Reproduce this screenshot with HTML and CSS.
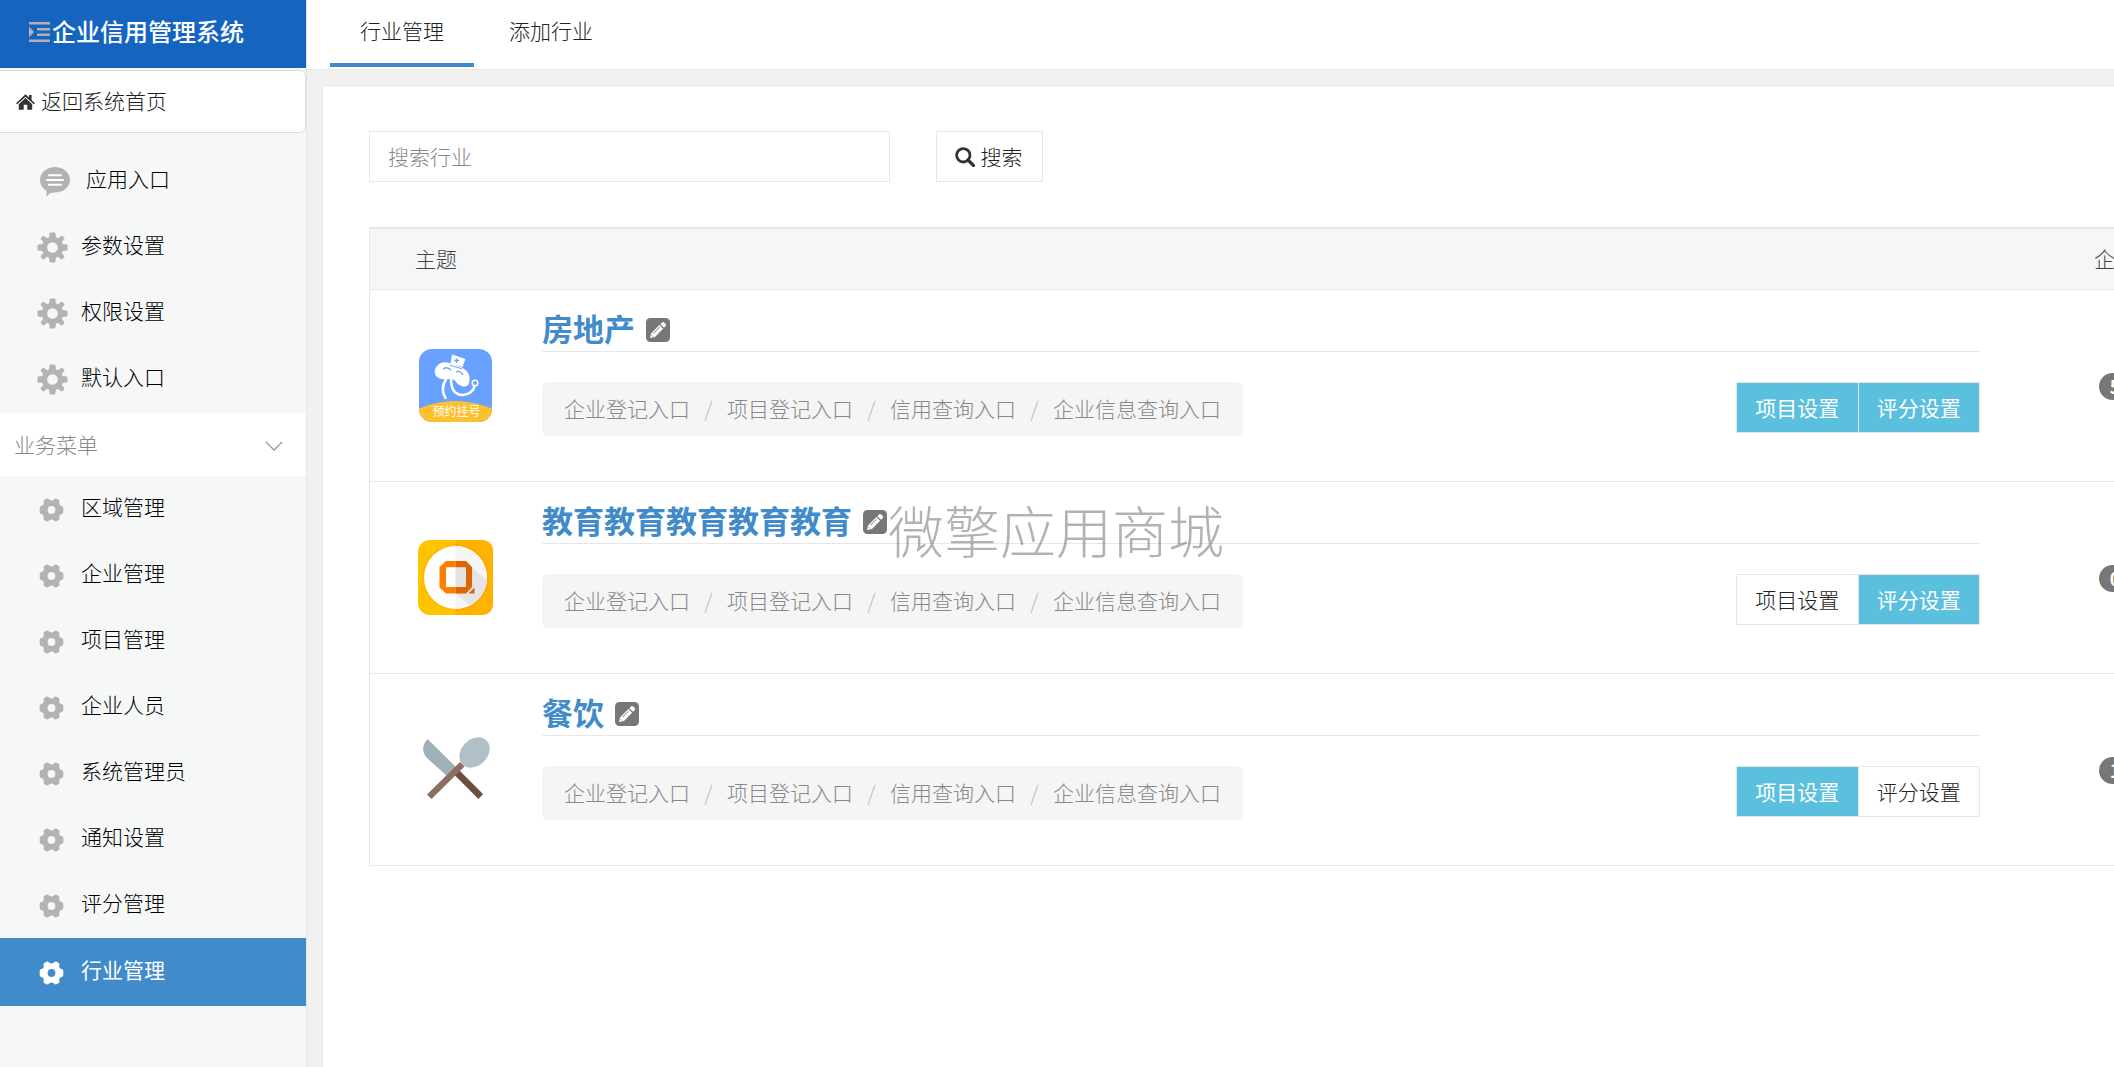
FILE: index.html
```html
<!DOCTYPE html>
<html lang="zh-CN">
<head>
<meta charset="utf-8">
<title>企业信用管理系统</title>
<link rel="stylesheet" href="styles.css">
</head>
<body>
<svg class="sprite" aria-hidden="true">
  <symbol id="cog8" viewBox="0 0 32 32">
    <path fill-rule="evenodd" d="M13 1.500 Q13 .5 14 .5H18Q19 .5 19 1.500L19.500 5.500L21.700 6.400L24.900 4Q25.600 3.500 26.300 4.100L28.200 6Q28.600 6.700 28.100 7.300L25.600 10.400L26.500 12.500L30.500 13Q31.500 13 31.500 14V18Q31.500 19 30.500 19L26.500 19.500L25.600 21.700L28.100 24.800Q28.600 25.500 28 26.200L26.100 28.100Q25.400 28.600 24.800 28.100L21.700 25.600L19.500 26.500L19 30.500Q19 31.500 18 31.500H14Q13 31.500 13 30.500L12.500 26.500L10.400 25.600L7.300 28.100Q6.600 28.600 6 28.100L4 26.100Q3.500 25.400 4 24.800L6.400 21.700L5.500 19.500L1.500 19Q.5 19 .5 18V14Q.5 13 1.500 13L5.500 12.500L6.400 10.400L4 7.300Q3.500 6.600 4 6L6 4Q6.700 3.500 7.300 4L10.400 6.400L12.500 5.500ZM16 10.500a5.500 5.500 0 1 0 0 11a5.500 5.500 0 0 0 0-11Z"/>
  </symbol>
  <symbol id="cog6" viewBox="0 0 26 26">
    <path fill-rule="evenodd" d="M7.500 .8Q9 .3 10 1.300Q13 4.200 16 1.300Q17 .3 18.500 .8L21 2.200Q22 3.100 21.500 4.500Q20.600 8 24.300 8.700Q25.600 9.200 25.800 10.500V15.500Q25.600 16.800 24.300 17.300Q20.600 18 21.500 21.500Q22 22.900 21 23.800L18.500 25.200Q17 25.700 16 24.700Q13 21.800 10 24.700Q9 25.700 7.500 25.200L5 23.800Q4 22.900 4.500 21.500Q5.400 18 1.700 17.300Q.4 16.800 .2 15.500V10.500Q.4 9.200 1.700 8.700Q5.400 8 4.500 4.500Q4 3.100 5 2.200ZM13 8.800a4.200 4.200 0 1 0 0 8.400a4.200 4.200 0 0 0 0-8.400Z"/>
  </symbol>
  <symbol id="edit" viewBox="0 0 24 24">
    <rect width="24" height="24" rx="4.500" fill="#777"/>
    <path fill="#fff" d="M14.300 6.200L16.300 4.300Q17.200 3.600 18.100 4.400L19.800 6.100Q20.500 7 19.800 7.900L18 9.700ZM13.400 7.100L17.100 10.800L9 18.900L4 20L5.200 15.200Z"/>
    <path d="M13.500 9.200L7.400 15.300M5.900 17.400l1 1" stroke="#777" stroke-width="1" fill="none"/>
  </symbol>
</svg>

<div class="app">
  <aside class="sidebar">
    <div class="brand">
      <svg class="brand-icon" viewBox="0 0 21 20"><path fill="#b0b0b0" d="M0 0H21V2.500H0ZM8 6H21V8.500H8ZM8 11.500H21V14H8ZM0 17.500H21V20H0ZM0 4.500L5 10L0 15.500Z"/></svg>
      <span>企业信用管理系统</span>
    </div>
    <a class="home" href="#">
      <svg class="home-icon" viewBox="0 0 19 16"><path fill="#333" d="M9.500 .3L13 3.600V1H15.600V6L19 9.200L17.800 10.300L9.500 2.800L1.200 10.300L0 9.200ZM9.500 4.100L16.200 10.200V15.800H11.300V10.800H7.700V15.800H2.800V10.200Z"/></svg>
      <span>返回系统首页</span>
    </a>
    <ul class="menu menu-main">
      <li><a href="#" class="wide"><svg class="icon-chat" viewBox="0 0 30 30"><path fill="#b3b3b3" d="M15 0A15 12.800 0 0 1 15 25.600Q11.500 25.600 9.500 26.500L6.500 29.800V23.800Q0 20 0 13A15 13 0 0 1 15 0Z"/><path d="M9 8.300H21M7 13H23M9 17.700H21" stroke="#fff" stroke-width="2" stroke-linecap="round"/></svg>应用入口</a></li>
      <li><a href="#"><svg class="icon-lg"><use href="#cog8"/></svg>参数设置</a></li>
      <li><a href="#"><svg class="icon-lg"><use href="#cog8"/></svg>权限设置</a></li>
      <li><a href="#"><svg class="icon-lg"><use href="#cog8"/></svg>默认入口</a></li>
    </ul>
    <button class="section" type="button">
      <span>业务菜单</span>
      <svg class="chevron" viewBox="0 0 18 10"><path d="M1 1L9 9L17 1" fill="none" stroke="#999" stroke-width="1.300"/></svg>
    </button>
    <ul class="menu">
      <li><a href="#"><svg class="icon-sm"><use href="#cog6"/></svg>区域管理</a></li>
      <li><a href="#"><svg class="icon-sm"><use href="#cog6"/></svg>企业管理</a></li>
      <li><a href="#"><svg class="icon-sm"><use href="#cog6"/></svg>项目管理</a></li>
      <li><a href="#"><svg class="icon-sm"><use href="#cog6"/></svg>企业人员</a></li>
      <li><a href="#"><svg class="icon-sm"><use href="#cog6"/></svg>系统管理员</a></li>
      <li><a href="#"><svg class="icon-sm"><use href="#cog6"/></svg>通知设置</a></li>
      <li><a href="#"><svg class="icon-sm"><use href="#cog6"/></svg>评分管理</a></li>
      <li class="active"><a href="#" aria-current="page"><svg class="icon-sm"><use href="#cog6"/></svg>行业管理</a></li>
    </ul>
  </aside>

  <div class="main">
    <nav class="tabs">
      <a class="tab active" href="#">行业管理</a>
      <a class="tab" href="#">添加行业</a>
    </nav>
    <main class="panel">
      <form class="search">
        <input type="text" placeholder="搜索行业" aria-label="搜索行业">
        <button type="button"><svg class="search-icon" viewBox="0 0 20 20"><circle cx="8.300" cy="8.300" r="6.700" fill="none" stroke="#333" stroke-width="2.800"/><path d="M13 13L18.500 18.500" stroke="#333" stroke-width="3.200" stroke-linecap="round"/></svg>搜索</button>
      </form>

      <table class="list">
        <colgroup><col class="col-logo"><col><col class="col-count"></colgroup>
        <thead>
          <tr><th colspan="2">主题</th><th class="count">企业</th></tr>
        </thead>
        <tbody>
          <tr>
            <td class="logo">
              <svg viewBox="0 0 75 75">
                <defs><clipPath id="tile"><rect x="1" y="1" width="73" height="73" rx="13"/></clipPath></defs>
                <g clip-path="url(#tile)">
                  <rect width="75" height="75" fill="#68a1ff"/>
                  <path d="M0 61Q37 45 75 61V75H0Z" fill="#fdc02f"/>
                </g>
                <path fill="#fff" d="M34 6.500L47.500 11L44.500 19L32.500 15.500ZM31 15C22 12 15 20 17 26C19 31 26 32 31 31C34 31 36 31 38 34C42 39 49 41 51 35C53 28 50 23 44 19.500Z"/>
                <path d="M38.500 10.500V15M36.300 12.500H41" stroke="#68a1ff" stroke-width="1.500"/>
                <path d="M32 17.300L44 20.800" stroke="#68a1ff" stroke-width="1"/>
                <path d="M25 21Q29 18 33 22M38 24Q42 22 45 27" fill="none" stroke="#68a1ff" stroke-width="1.300"/>
                <path d="M28 31Q22 41 27.500 50M33 31Q33 47 45 47Q55 46 57 37" fill="none" stroke="#fff" stroke-width="2.500" stroke-linecap="round"/>
                <circle cx="57" cy="35" r="2.800" fill="#68a1ff" stroke="#fff" stroke-width="1.500"/>
                <text x="38.500" y="68" class="logo-text">预约挂号</text>
              </svg>
            </td>
            <td class="info">
              <h3><span>房地产</span><a href="#" aria-label="编辑"><svg class="edit"><use href="#edit"/></svg></a></h3>
              <div class="line">
                <ol class="crumbs"><li><a href="#">企业登记入口</a></li><li><a href="#">项目登记入口</a></li><li><a href="#">信用查询入口</a></li><li><a href="#">企业信息查询入口</a></li></ol>
                <div class="group"><button class="on" type="button">项目设置</button><button class="on" type="button">评分设置</button></div>
              </div>
            </td>
            <td class="count"><span class="badge">5</span></td>
          </tr>
          <tr>
            <td class="logo">
              <svg viewBox="0 0 75 75">
                <rect width="75" height="75" rx="12" fill="#ffc400"/>
                <path d="M37.500 0H63Q75 0 75 12V63Q75 75 63 75H37.500Z" fill="#ffb300"/>
                <path d="M37.500 4A33.500 33.500 0 0 0 37.500 71Z" fill="#ffb900"/>
                <path d="M37.500 4A33.500 33.500 0 0 1 37.500 71Z" fill="#ffa800"/>
                <circle cx="37.500" cy="37.500" r="31.500" fill="#fff"/>
                <path d="M37.500 6A31.500 31.500 0 0 1 37.500 69Z" fill="#f5f5f5"/>
                <path d="M54 27L69 40Q67 57 52 65.500L38 54V53Z" fill="#e5e5e5"/>
                <path d="M37.500 21H28L21.500 27V47.500L28 53.500H37.500V47H28V27.500H37.500Z" fill="#ff7d00"/>
                <path d="M37.500 21H48L54 27V47L48 53.500H37.500V47H48V27.500H37.500ZM56.500 47.500V53.500H50.500Z" fill="#dc6500"/>
                <path d="M28 27.500H37.500V47H28Z" fill="#fff"/><path d="M37.500 27.500H47.500V47H37.500Z" fill="#e2e2e2"/>
              </svg>
            </td>
            <td class="info">
              <h3><span>教育教育教育教育教育</span><a href="#" aria-label="编辑"><svg class="edit"><use href="#edit"/></svg></a><em class="watermark">微擎应用商城</em></h3>
              <div class="line">
                <ol class="crumbs"><li><a href="#">企业登记入口</a></li><li><a href="#">项目登记入口</a></li><li><a href="#">信用查询入口</a></li><li><a href="#">企业信息查询入口</a></li></ol>
                <div class="group"><button type="button">项目设置</button><button class="on" type="button">评分设置</button></div>
              </div>
            </td>
            <td class="count"><span class="badge">0</span></td>
          </tr>
          <tr>
            <td class="logo">
              <svg viewBox="0 0 75 75">
                <path d="M9.500 7L39 36L29 44L9 26Q1 17 9.500 7Z" fill="#9fb0b9"/>
                <path d="M41 38L65 62L60.500 67L36.500 43Z" fill="#6d4c41"/>
                <ellipse cx="56.500" cy="20.500" rx="17" ry="13" transform="rotate(-45 56.500 20.500)" fill="#b1bfc6"/>
                <path d="M42 30L46.500 34.500L13.500 67L9 62.500Z" fill="#8d6e63"/>
              </svg>
            </td>
            <td class="info">
              <h3><span>餐饮</span><a href="#" aria-label="编辑"><svg class="edit"><use href="#edit"/></svg></a></h3>
              <div class="line">
                <ol class="crumbs"><li><a href="#">企业登记入口</a></li><li><a href="#">项目登记入口</a></li><li><a href="#">信用查询入口</a></li><li><a href="#">企业信息查询入口</a></li></ol>
                <div class="group"><button class="on" type="button">项目设置</button><button type="button">评分设置</button></div>
              </div>
            </td>
            <td class="count"><span class="badge">1</span></td>
          </tr>
        </tbody>
      </table>
    </main>
  </div>
</div>
</body>
</html>
```
FILE: styles.css
```css
* { box-sizing: border-box; }

body {
  margin: 0;
  background: #f1f1f1;
  color: #222;
  font-family: "Noto Sans CJK SC", sans-serif;
  font-size: 21px;
  font-weight: 300;
  line-height: 30px;
}

a { color: inherit; text-decoration: none; }
ul, ol { margin: 0; padding: 0; list-style: none; }
button, input { font: inherit; color: inherit; border-radius: 0; }
svg { flex: none; display: block; }
.sprite { position: absolute; width: 0; height: 0; }

.app {
  display: grid;
  grid-template-columns: 307px minmax(0, 1fr);
  min-height: 100vh;
}

/* Sidebar */
.sidebar {
  background: #f6f8f7;
  border-right: 1px solid #e5e5e5;
}
.brand {
  display: flex;
  align-items: center;
  gap: 2px;
  height: 68px;
  padding: 0 0 6px 29px;
  background: #1565c0;
  color: #fff;
  font-size: 24px;
  font-weight: 500;
}
.brand-icon { width: 21px; height: 20px; margin-top: 2px; }
.home {
  display: flex;
  align-items: center;
  gap: 6px;
  height: 63px;
  margin-top: 2px;
  padding: 0 0 4px 16px;
  background: #fff;
  border: 1px solid #ddd;
  border-left: 0;
  border-radius: 0 6px 6px 0;
}
.home-icon { width: 19px; height: 16px; margin-top: 4px; }
.menu a {
  display: flex;
  align-items: center;
  height: 66px;
  padding: 0 0 6px 37px;
  color: #000;
  fill: #b3b3b3;
}
.menu-main { padding: 14px 0 3px; }
.menu-main a { padding-bottom: 4px; }
.menu .wide { padding-left: 40px; }
.icon-chat { width: 30px; height: 30px; margin: 7px 16px 0 0; }
.icon-lg { width: 31px; height: 31px; margin: 6px 13px 0 0; }
.icon-sm { width: 25px; height: 24px; margin: 8px 17px 0 2px; }
.menu .active a {
  height: 68px;
  background: #428bca;
  color: #fff;
  fill: #fff;
  font-weight: 400;
}
.section {
  display: flex;
  align-items: center;
  justify-content: space-between;
  width: 100%;
  height: 62px;
  padding: 0 23px 2px 14px;
  border: 0;
  background: #fff;
  color: #888;
}
.chevron { width: 18px; height: 10px; margin-top: 4px; }

/* Tabs */
.tabs {
  display: flex;
  gap: 5px;
  height: 70px;
  padding: 0 23px;
  background: #fff;
  border-bottom: 1px solid #e7e7e7;
}
.tab {
  height: 67px;
  padding: 15px 30px 0;
  border-bottom: 4px solid transparent;
}
.tab.active { border-color: #428bca; }

/* Content panel */
.main {
  display: flex;
  flex-direction: column;
  min-width: 0;
}
.panel {
  flex: 1;
  margin: 15px 0 0 15px;
  padding: 45px 0 0 46px;
  background: #fff;
  border: solid #e7e7e7;
  border-width: 1px 0 0 1px;
  overflow: hidden;
}
.search {
  display: flex;
  gap: 46px;
  margin-bottom: 45px;
}
.search input {
  width: calc(30% - 3px);
  height: 51px;
  padding: 0 18px 2px;
  border: 1px solid #e7e7eb;
  outline: 0;
}
.search input::placeholder { color: #888; opacity: 1; }
.search button {
  display: flex;
  align-items: center;
  gap: 6px;
  height: 51px;
  padding: 0 19px 2px 18px;
  border: 1px solid #e7e7eb;
  background: #fff;
}
.search-icon { width: 20px; height: 20px; margin-top: 3px; }

/* Industry list: wider than the panel, so the count column runs off its edge */
.list {
  width: calc(100% + 121px);
  table-layout: fixed;
  border-collapse: separate;
  border-spacing: 0;
  border-left: 1px solid #e7e7eb;
}
.col-logo { width: 172px; }
.col-count { width: 240px; }
.list th {
  height: 63px;
  padding: 0 45px 3px;
  border: solid #e7e7eb;
  border-width: 2px 0 1px;
  background: #f6f6f6;
  color: #444;
  font-weight: 300;
  text-align: left;
}
.list td {
  height: 192px;
  padding: 0 0 1px;
  border-bottom: 1px solid #e7e7eb;
}
.list .count { padding-left: 0; padding-right: 0; text-align: center; }
.logo svg { width: 75px; height: 75px; margin-left: 48px; }
.logo-text {
  fill: #fff;
  font-size: 12px;
  font-weight: 400;
  text-anchor: middle;
}
.list .info {
  padding: 15px 15px 0 0;
  vertical-align: top;
}
.info h3 {
  display: flex;
  align-items: center;
  position: relative;
  height: 47px;
  margin: 0 0 30px;
  border-bottom: 1px solid #e7e7eb;
  color: #428bca;
  font-size: 31px;
  font-weight: 700;
}
.edit { width: 24px; height: 24px; margin: 4px 0 0 11px; }
.line {
  display: flex;
  align-items: flex-start;
  justify-content: space-between;
}
.crumbs {
  display: flex;
  padding: 11px 22px 13px;
  border-radius: 6px;
  background: #f5f5f5;
  color: #888;
}
.crumbs li { display: flex; }
.crumbs li + li::before {
  content: "/";
  width: 37px;
  color: #bbb;
  text-align: center;
}
.group {
  display: flex;
  width: 244px;
  border: 1px solid #e7e7eb;
}
.group button {
  flex: 1;
  height: 49px;
  padding: 0 0 2px;
  border: 0;
  background: #fff;
}
.group button + button { border-left: 1px solid #e7e7eb; }
.group .on { background: #5bc0de; color: #fff; font-weight: 400; }
.badge {
  display: inline-block;
  padding: 0 11px;
  border-radius: 14px;
  background: #777;
  color: #fff;
  font-size: 18px;
  font-weight: 700;
  line-height: 27px;
}

/* Store mark laid over the title */
.watermark {
  position: absolute;
  left: 346px;
  top: 4px;
  color: rgba(0, 0, 0, .3);
  font-size: 56px;
  font-style: normal;
  font-weight: 300;
  line-height: 56px;
  white-space: nowrap;
  pointer-events: none;
}
```
